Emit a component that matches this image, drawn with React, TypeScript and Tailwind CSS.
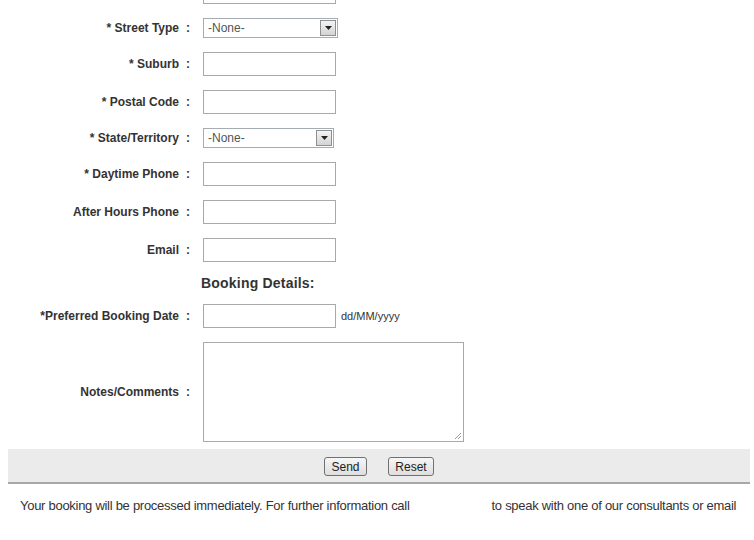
import React from "react";

type Field = {
  label: string;
  kind: "text" | "select";
  selectWidth?: string;
};

const FIELDS: Field[] = [
  { label: "* Street Type", kind: "select", selectWidth: "w-[135px]" },
  { label: "* Suburb", kind: "text" },
  { label: "* Postal Code", kind: "text" },
  { label: "* State/Territory", kind: "select", selectWidth: "w-[131px]" },
  { label: "* Daytime Phone", kind: "text" },
  { label: "After Hours Phone", kind: "text" },
  { label: "Email", kind: "text" },
];

function TextBox() {
  return <div className="h-[24px] w-[133px] border border-[#a9a9a9] bg-white" />;
}

function SelectBox({ width }: { width: string }) {
  return (
    <div className={`flex h-[20px] items-center border border-[#a5acb2] bg-white ${width}`}>
      <span className="flex-1 pl-[4px] text-[12px] leading-none text-[#555]">-None-</span>
      <span className="mr-[1px] flex h-[16px] w-[16px] items-center justify-center border border-[#8f8f8f] bg-gradient-to-b from-[#f4f4f4] to-[#d4d4d4]">
        <svg width="7" height="4" viewBox="0 0 7 4">
          <path d="M0 0h7L3.5 4z" fill="#222" />
        </svg>
      </span>
    </div>
  );
}

function Colon() {
  return <div className="pl-[7px] text-[12px] font-bold text-[#333]">:</div>;
}

function Label({ text, height }: { text: string; height: string }) {
  return (
    <div className={`flex items-center justify-end ${height}`}>
      <span className="text-[12px] font-bold text-[#333]">{text}</span>
    </div>
  );
}

export default function App() {
  return (
    <div className="h-[540px] w-[754px] overflow-hidden bg-white font-['Liberation_Sans',Arial,sans-serif]">
      <div className="-mt-[27px] pl-[8px] pr-[4px]">
        <div className="grid grid-cols-[171px_24px_1fr] items-center">
          {/* row scrolled mostly out of view */}
          <div className="h-[38px]" />
          <div />
          <div>
            <TextBox />
          </div>

          {FIELDS.map((f) => (
            <React.Fragment key={f.label}>
              <Label text={f.label} height={f.kind === "select" ? "h-[34px]" : "h-[38px]"} />
              <Colon />
              <div>
                {f.kind === "select" ? <SelectBox width={f.selectWidth!} /> : <TextBox />}
              </div>
            </React.Fragment>
          ))}

          {/* Booking details */}
          <div className="h-[28px]" />
          <div />
          <div className="-ml-[2px] text-[14px] font-bold tracking-[0.2px] text-[#333]">Booking Details:</div>

          <Label text="*Preferred Booking Date" height="h-[38px]" />
          <Colon />
          <div className="flex items-center gap-[5px]">
            <TextBox />
            <span className="text-[11px] text-[#333]">dd/MM/yyyy</span>
          </div>

          <Label text="Notes/Comments" height="h-[114px]" />
          <Colon />
          <div>
            <div className="relative h-[100px] w-[261px] border border-[#a9a9a9] bg-white">
              <svg className="absolute bottom-[1px] right-[1px]" width="8" height="8" viewBox="0 0 8 8">
                <path d="M7 1L1 7M7 4L4 7" stroke="#999" strokeWidth="1" />
              </svg>
            </div>
          </div>
        </div>

        <div className="flex h-[35px] items-center justify-center gap-[21px] border-b-2 border-[#a8a8a8] bg-[#ebebeb] pt-[2px]">
          <button className="h-[19px] w-[43px] rounded-[3px] border border-[#707070] bg-gradient-to-b from-[#f6f6f6] to-[#dedede] text-[12px] leading-none text-[#222]">
            Send
          </button>
          <button className="h-[19px] w-[46px] rounded-[3px] border border-[#707070] bg-gradient-to-b from-[#f6f6f6] to-[#dedede] text-[12px] leading-none text-[#222]">
            Reset
          </button>
        </div>

        <p className="pl-[12px] pt-[12px] text-[13px] tracking-[-0.28px] text-[#333]">
          Your booking will be processed immediately. For further information call
          <span className="inline-block w-[82px]" />
          to speak with one of our consultants or email
        </p>
      </div>
    </div>
  );
}
